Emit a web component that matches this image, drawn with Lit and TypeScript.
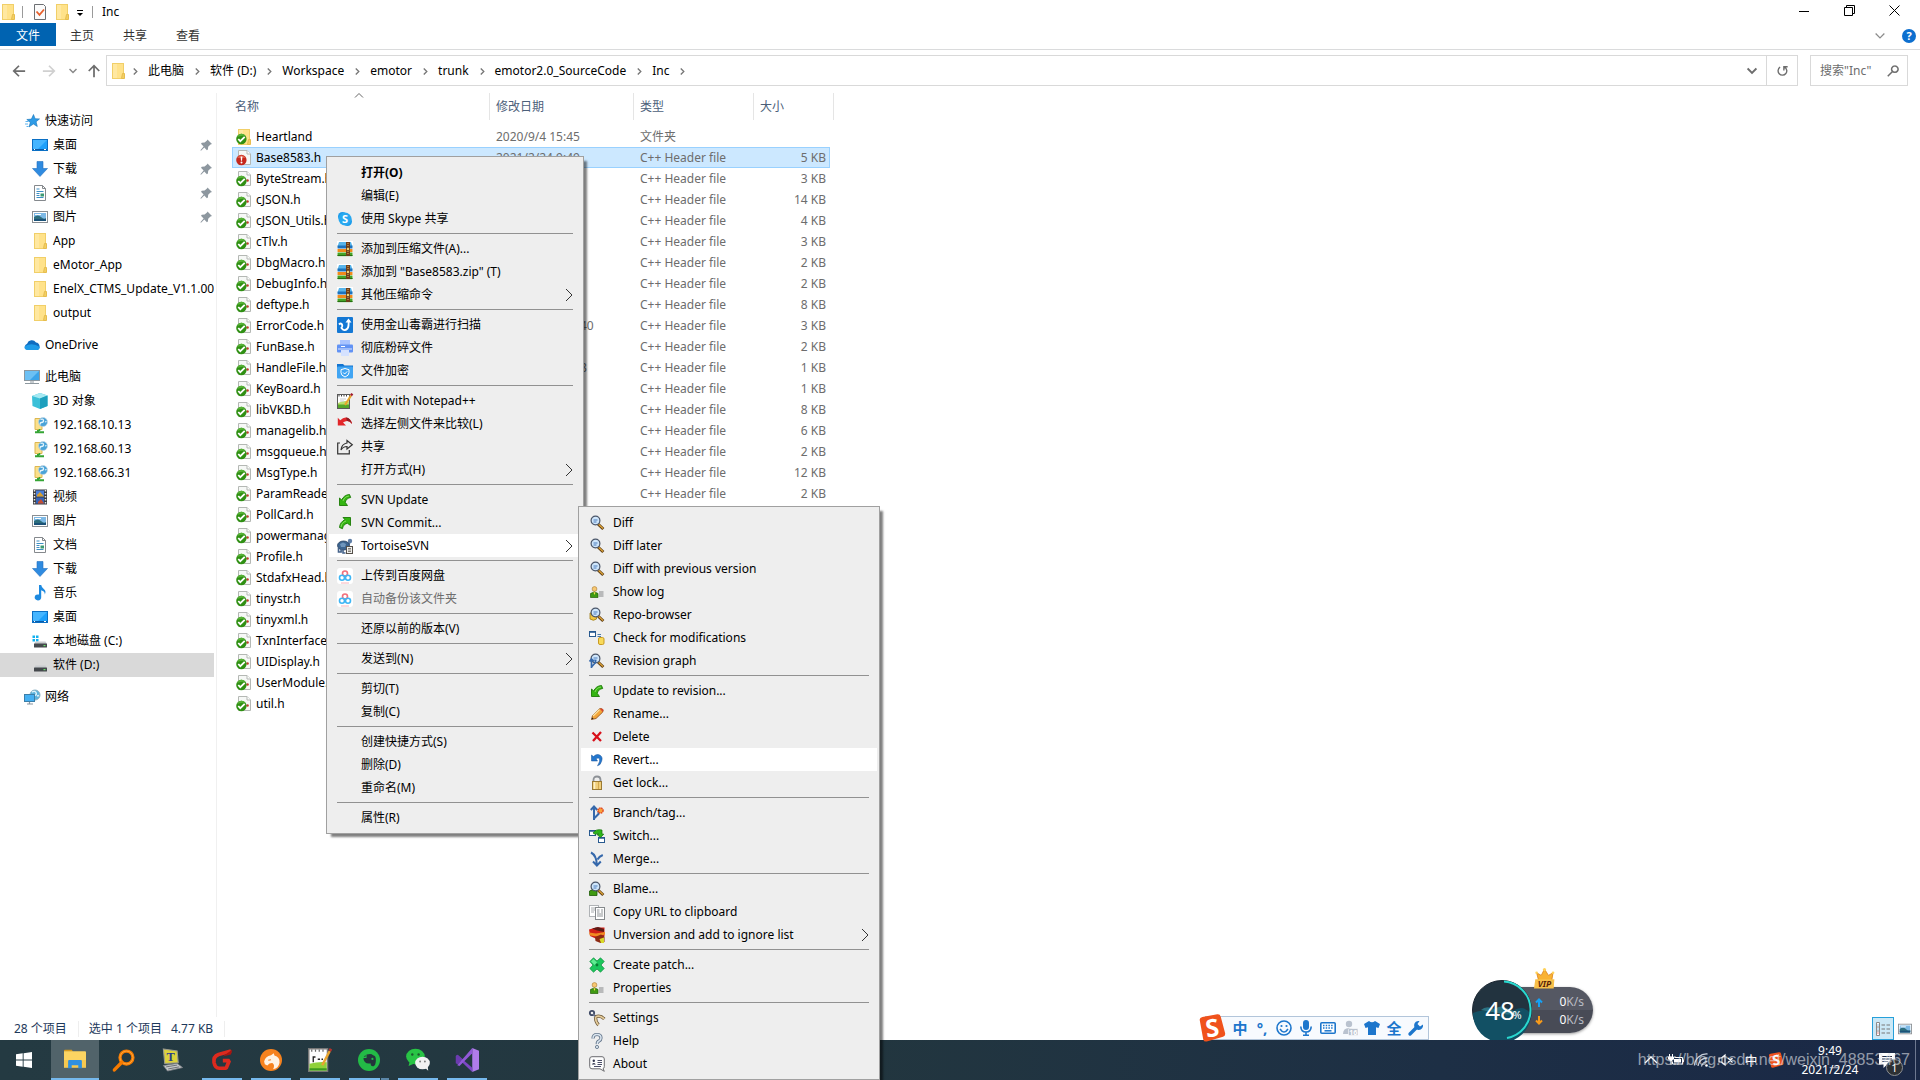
import { LitElement, html, svg, css, nothing, TemplateResult, SVGTemplateResult } from "lit";
import { customElement, property } from "lit/decorators.js";
import { classMap } from "lit/directives/class-map.js";

/* ---------- icon drawings, each on a 16 x 16 grid unless noted ---------- */

const page = svg`
  <path d="M2.5 .5H11l3.5 3.5v10.5h-12z" fill="#f6f8f6" stroke="#b4b8b4"/>
  <path d="M11 .5V4h3.5" fill="#fff" stroke="#b4b8b4"/>`;
const okBadge = svg`
  <circle cx="5.4" cy="10" r="5.2" fill="#2f9012"/>
  <path d="M1 8a5 5 0 0 1 8.6-1.3C7 6.500 4 7 1 8z" fill="#57b237"/>
  <path d="M2.300 10l2 2.200 4.400-4.400" fill="none" stroke="#fff" stroke-width="1.800"/>`;
const folderBody = svg`
  <rect x="2.500" y=".5" width="11" height="15" fill="#ffe28a" stroke="#f1cf68"/>
  <path d="M3 1h4v14H3z" fill="#ffeaa6" opacity=".8"/>
  <path d="M12.500 10.500h2v5h-3z" fill="#f3cf63" stroke="#e6bd4e"/>`;
const lens = svg`
  <path d="M9 9l5.300 5" stroke="#5b3a10" stroke-width="3"/>
  <path d="M9.500 9.200l4.500 4.200" stroke="#e0a63a" stroke-width="1.300"/>
  <circle cx="6.500" cy="5.500" r="4.400" fill="#cfe6fb" stroke="#4a5568" stroke-width="1.200"/>
  <path d="M4.500 5h4M4.500 7h3" stroke="#3c6fb4" stroke-width=".9"/>`;
const greenArrow = svg`
  <path d="M2.500 13.500V6l2.200 2C6 5 8.500 2.800 12.500 2.500l1.200 3C11 5.800 9.200 7.200 8.200 10.300l2.300 3.200z" fill="#34b512" stroke="#1c7a06" stroke-width=".9"/>
  <path d="M6 9C7 6 9 4.300 12 4" fill="none" stroke="#8be063" stroke-width=".9"/>`;
const person = svg`
  <circle cx="5.500" cy="5" r="2.400" fill="#f7c873" stroke="#a9772c" stroke-width=".6"/>
  <path d="M1.500 13.500V9.500Q5.500 6.500 9 9.500v4z" fill="#3f9a12" stroke="#256008" stroke-width=".7"/>
  <path d="M4.500 8.200L5.500 11l1-2.800z" fill="#f5e04a"/>
  <path d="M10 8h4.500M10 10h4.500M10 12h4.500" stroke="#77797c" stroke-width=".9"/>`;
const rar = svg`
  <rect width="16" height="16" fill="#fff"/>
  <path d="M2 1h12l1.500 4.500H.5z" fill="#58b4ea"/><path d="M.5 4.500h15V7.500H.5z" fill="#1c72bd"/>
  <rect x=".5" y="8" width="15" height="3" fill="#f08a1c"/>
  <rect x=".5" y="11.500" width="15" height="3.500" fill="#46a327"/><path d="M.5 14h15v1.200H.5z" fill="#256d13"/>
  <rect x="9" y="1" width="4" height="14" fill="#6e3d19"/><path d="M11 2v12" stroke="#e8b45c" stroke-dasharray="1 1"/>
  <rect x="9.500" y="6.500" width="3" height="3" fill="#f2d071" stroke="#55300f" stroke-width=".6"/>`;
const baidu = svg`
  <rect width="16" height="16" rx="3" fill="#fff"/>
  <circle cx="8" cy="5.500" r="2.500" fill="none" stroke="#f2707c" stroke-width="1.600"/>
  <circle cx="5" cy="9.700" r="2.500" fill="none" stroke="#3fb6f5" stroke-width="1.600"/>
  <circle cx="11" cy="9.700" r="2.500" fill="none" stroke="#3fb6f5" stroke-width="1.600"/>
  <path d="M4 15h8" stroke="#f6a0a8" stroke-width=".8"/>`;
const drive = svg`
  <path d="M3.500 8.500h10l1.500 2.500H2z" fill="#c9cccf"/>
  <rect x="2" y="10.500" width="13" height="4" rx=".6" fill="#45494d"/><rect x="11.500" y="12" width="2" height="1.200" fill="#69e36a"/>`;
const netFolder = svg`
  <path d="M3 1.500h7v11H3z" fill="#fbe08b" stroke="#dcb750"/><path d="M6 13v2M3 15.200h9" stroke="#35a535" stroke-width="2"/>
  <path d="M7.500 12v2" stroke="#35a535" stroke-width="1.600"/>
  <circle cx="11" cy="5" r="4.500" fill="#4aa3d8" stroke="#c9d7e0" stroke-width=".6"/>
  <path d="M8.500 2.500q3-1 3 1t-2 2-1 2M13 5l1.500-.5" stroke="#e5f4fb" stroke-width="1.300" fill="none"/>`;
const branchBlue = "#3568ab";

const ICONS: Record<string, SVGTemplateResult> = {
  folder: folderBody,
  folderOk: svg`${folderBody}${okBadge}`,
  fileOk: svg`${page}<circle cx="11.500" cy="9.500" r="1.300" fill="#c0392b"/>${okBadge}`,
  fileMod: svg`${page}<circle cx="5.400" cy="10" r="5.200" fill="#c6281c"/><path d="M1 8a5 5 0 0 1 8.800 0z" fill="#de5a45"/>
    <path d="M4.600 6.500h1.800l-.4 4.300h-1z" fill="#fff"/><circle cx="5.500" cy="12.500" r="1" fill="#fff"/>`,
  docCheck: svg`<path d="M2.500.5h9l2 2v13h-11z" fill="#fbfbfb" stroke="#6c6f73"/><path d="M4.500 7.500l3 3.300 4.500-5.300" fill="none" stroke="#e8602c" stroke-width="1.800"/>`,
  star: svg`<path d="M9.500 1.500l1.600 4.200 4.400.2-3.400 2.900 1.200 4.700-3.900-2.500L5 14l1.300-4.600L2.800 6.500l4.600-.4z" fill="#2e9be6" stroke="#1673b8" stroke-width=".6"/>
    <path d="M1.500 8.500h3M1 11h3M2.500 13.500h2" stroke="#5fb4ee"/>`,
  desktop: svg`<rect x=".5" y="2.500" width="15" height="11" fill="#1ea0fb" stroke="#0b6fc4"/><path d="M1 3h14L5 13H1z" fill="#45b5ff"/><path d="M1 12.500h14" stroke="#0a5aa6"/><path d="M2 12.500h1M12 12.500h2" stroke="#fff"/>`,
  download: svg`<path d="M5 .5h6v7h4.500L8 15.500.5 7.500H5z" fill="#2f8be0" stroke="#2371bf" stroke-width=".6"/>`,
  doc: svg`<path d="M2.500.5h8l3 3v12h-11z" fill="#fff" stroke="#85898d"/><path d="M10.500.5v3h3" fill="none" stroke="#85898d"/>
    <path d="M4.500 4h3M4.500 6.500h7M4.500 8.500h3M4.500 10.500h3M4.500 12.500h7" stroke="#3d8fc4"/><rect x="8.500" y="8.500" width="3.500" height="3" fill="#3c9a72"/>`,
  picture: svg`<rect x=".5" y="2.500" width="15" height="11" fill="#fff" stroke="#8a8f94"/><rect x="2" y="4" width="12" height="8" fill="#7db9e6"/><path d="M2 8q4-3 7 0t5 1v3H2z" fill="#2d6e7d"/><path d="M2 10h12v2H2z" fill="#1b5278"/><path d="M3 5.500h6" stroke="#fff"/>`,
  cloud: svg`<path d="M3.500 13a3.200 3.200 0 0 1-.4-6.200A5 5 0 0 1 12 5.500 4 4 0 0 1 13.500 13z" fill="#0f6cc0"/><path d="M3 13q-3-1-2.500-3.500Q8 5 15.800 10q-.3 3-2.800 3z" fill="#1f9be8"/>`,
  pc: svg`<rect x=".5" y="1.500" width="15" height="10" fill="#3ba4ea" stroke="#8b979f"/><path d="M1 2h14L6 11H1z" fill="#6cc0f4"/><path d="M1 14.500h14M6 13h4" stroke="#8d989f" stroke-width="1.200"/>`,
  cube: svg`<path d="M0 3l8-3 7.500 2.500v10.500L8 16 .5 13z" fill="#3bc0d8"/><path d="M0 3l8-3 7.500 2.500L8 5.500z" fill="#a6e9f2"/><path d="M8 5.500l7.500-3v10.500L8 16z" fill="#1d9fbd"/>`,
  net: netFolder,
  video: svg`<rect x="1" y=".5" width="14" height="15" fill="#3b3b3e"/><path d="M2.500 1v14M13.500 1v14" stroke="#e8e8e8" stroke-width="1.500" stroke-dasharray="1.500 1.500"/>
    <rect x="4" y="1.500" width="8" height="6" fill="#4a7ed8"/><rect x="4" y="8.500" width="8" height="6" fill="#3463b8"/><path d="M5 6l3-3 4 4.500H5z" fill="#d9a02c"/><path d="M6 13l3-3 3 4.500H6z" fill="#c54f32"/>`,
  music: svg`<path d="M7 0h2.200q.4 2.600 2.800 4.200 2.500 2 .8 5.300.2-3.200-3.600-4.300V12a3.300 3 0 1 1-2.200-2.400z" fill="#1d8ae0"/>`,
  driveC: svg`<path d="M.5 2.500h2.500v2.500H.5zM4 2.500h2.500v2.500H4zM.5 6h2.500v2.500H.5zM4 6h2.500v2.500H4z" fill="#12b1ef"/>${drive}`,
  driveD: drive,
  network: svg`<circle cx="11" cy="6" r="5" fill="#5db4dd" stroke="#8fb3c4"/><path d="M8 3q3-1.500 4 .5t-1 3M13 7l2-.5" stroke="#dff3fb" fill="none" stroke-width="1.400"/>
    <rect x=".5" y="5.500" width="10" height="7" fill="#45b0f2" stroke="#3c7ea8"/><path d="M3 15h6M5.500 13v2" stroke="#8794a0" stroke-width="1.200"/>`,
  pin: svg`<path d="M9.500 2.500l4.500 4.500-1.500.4-2.300 2.400-.3 2.700-1 .7-2.600-2.700L3 13.700l-.6-.5L5.600 9.400 3 6.800l.8-1 2.800-.2L9 3.500z" fill="#8d979f"/>`,
  skype: svg`<rect x="1" y="1" width="9" height="9" rx="4.500" fill="#1c9bea"/><rect x="6" y="6" width="9" height="9" rx="4.500" fill="#1c9bea"/><circle cx="8" cy="8" r="6.500" fill="#28a8f0"/>
    <text x="8" y="12" text-anchor="middle" font-size="11" font-weight="700" fill="#fff">S</text>`,
  rar,
  duba: svg`<rect width="16" height="16" rx="1" fill="#1478d4"/><path d="M2 7.500q2-2 3 0t-.5 3.500q2.500 4 6 .5 1.500-2 1-8.500" fill="none" stroke="#fff" stroke-width="1.900"/><path d="M8.500 5.500l3-4 3 4z" fill="#fff"/>`,
  shred: svg`<rect x="3" y="0" width="10" height="6" fill="#a9c4ff"/><rect y="4.500" width="16" height="8" rx="1" fill="#6293f4"/><path d="M1 9h14" stroke="#dce7ff"/><rect x="4" y="10" width="8" height="6" fill="#d5e2ff"/><path d="M4 6.500h4" stroke="#fff"/>`,
  encrypt: svg`<path d="M0 1h6l1.500 1.500H16V5H0z" fill="#1274d0"/><rect y="3.500" width="16" height="12" rx="1" fill="#41a5f3"/><path d="M8 5.500l4 1.200v3Q12 12.500 8 14q-4-1.500-4-4.300v-3z" fill="none" stroke="#fff"/><path d="M6.200 9.500l1.500 1.500 2.500-2.600" stroke="#fff" fill="none"/>`,
  npp: svg`<rect x=".5" y="1.500" width="12" height="14" fill="#fff" stroke="#5a5a5a"/><path d="M1 10q6-3 11-1.500V12H1z" fill="#b9dd6a"/><path d="M1 11.500h11V15H1z" fill="#55a628"/><path d="M2 2v1.500M4.500 2v1.500M7 2v1.500M9.500 2v1.500" stroke="#444"/><path d="M3 6h6M3 8h4" stroke="#c9ccd0"/><path d="M8 12l6-9.500" stroke="#e8a62c" stroke-width="2.200"/><path d="M14 2.500L15.300.6" stroke="#a01c2c" stroke-width="2.400"/>`,
  undoRed: svg`<path d="M.8 9.500V1.800l2.400 2.400Q8.500-1 13 3.500q2 2 2 4.500Q12 4 8 5.500L6 6.500l3 3z" fill="#e2262a"/><path d="M9 1.500q4-.5 6 6.500-2-3.500-5-3z" fill="#8d1c22"/>`,
  share: svg`<path d="M3 4H.7v10.800h11.600V11" fill="none" stroke="#333" stroke-width="1.200"/><path d="M10 1.500l5.300 4.300L10 10V7.500q-4 0-6 3.500.5-6 6-7z" fill="none" stroke="#333" stroke-width="1.200"/>`,
  greenIn: greenArrow,
  greenOut: svg`<g transform="matrix(0 1 1 0 0 0)">${greenArrow}</g>`,
  tortoise: svg`<circle cx="13" cy="3" r="2.200" fill="#5f7ea6"/><path d="M10 9l3-5.500" stroke="#5f7ea6" stroke-width="2.400"/><ellipse cx="6.500" cy="7.500" rx="6" ry="4.500" fill="#3d6590" stroke="#27405f" stroke-width=".8"/>
    <path d="M3 6l3-1.500L9 6 8 9H4z" fill="#6f96bd"/><path d="M1.500 10v4h2.600v-3M6 11.500V15h2.500" stroke="#45638a" stroke-width="1.600" fill="none"/>
    <rect x="9.500" y="8.500" width="6" height="7" fill="#f1f1ee" stroke="#55504a"/><path d="M11 10.500h3M11 12h3M11 13.500h3" stroke="#6b665f" stroke-width=".8"/>`,
  baidu,
  diff: lens,
  log: person,
  repo: svg`<path d="M1 6v6q3.500 2.500 6.500 0V6z" fill="#f2c63e" stroke="#9c7a12" stroke-width=".8"/>${lens}`,
  check: svg`<rect x=".5" y="1.500" width="6" height="5" fill="#fff" stroke="#28598f"/><path d="M0 2h7" stroke="#28598f" stroke-width="1.600"/><path d="M8.500 4.500h3.500M8.500 6.500h3.500" stroke="#4b7aa8"/><rect x="9.500" y="7.500" width="5.500" height="7" rx="1.500" fill="#f8da5a" stroke="#c99a22"/>`,
  graph: svg`${lens}<path d="M2.500 15V6M.5 8.500l2-2.500 2.500 2.500M2.500 14l4-4.500V7" fill="none" stroke="${branchBlue}" stroke-width="1.700"/>`,
  rename: svg`<path d="M2.500 13.500l1-4L10 3q2-1 3.500.2t0 3.100L7 12.500z" fill="#f3a53a" stroke="#8d4a12" stroke-width=".8"/><path d="M4 10l6.500-6.500" stroke="#fbe2a1" stroke-width="1.500"/><path d="M11 2.800q2-.8 2.800.5t-.3 2.600z" fill="#d9432f"/><path d="M2.500 13.500l.6-2 1.500 1.300z" fill="#222"/>`,
  remove: svg`<path d="M3.500 3.500l8.500 8.500M12 3L4 12" stroke="#d8101a" stroke-width="2.300"/>`,
  revert: svg`<path d="M2.500 9V3l2 1.600Q8 1 11.500 3.500T11 12.500l-2.500 1.300Q11.500 9 10.500 7T7 6.800L8.500 9z" fill="#2477cd" stroke="#124f96" stroke-width=".5"/>`,
  lock: svg`<path d="M4.500 8V5q0-3.500 3.500-3.500T11.500 5v3" fill="none" stroke="#8d9196" stroke-width="1.800"/><rect x="3.500" y="6.500" width="9" height="8" fill="#f1cf7b" stroke="#9b7a33"/><path d="M5.500 7v7" stroke="#fdf0c9" stroke-width="1.500"/><path d="M9.500 7v7" stroke="#d4a94f"/>`,
  branch: svg`<path d="M5 15V2M1.800 5L5 1.500 8.200 5M5 13.500L9.500 9V6.500" fill="none" stroke="${branchBlue}" stroke-width="2"/><circle cx="11.500" cy="5.500" r="2.600" fill="#f9a13a" stroke="#e2441f" stroke-width="1.400" stroke-dasharray="1.500 .6"/>`,
  switch: svg`<rect x=".5" y="2.500" width="6" height="5" fill="#fff" stroke="#28598f"/><path d="M0 3h7" stroke="#28598f" stroke-width="1.500"/><rect x="9.500" y="9.500" width="6" height="5" fill="#fff" stroke="#28598f"/><path d="M9 10h7" stroke="#28598f" stroke-width="1.500"/>
    <path d="M4 5q3-4.500 9-3v4l1.800.2-3.300 3.300-3.700-3.200 2-.1Q8 4.500 6.500 6.500z" fill="#2eb41a" stroke="#15720a" stroke-width=".7"/>`,
  merge: svg`<path d="M2 1.500q5.500 3 5.800 12M13.800 4Q10 5.500 8.500 8.500M4 10.500l3.900 4 3.900-4" fill="none" stroke="${branchBlue}" stroke-width="2"/>`,
  blame: svg`<path d="M.5 14.500V10Q4 7 8 10v4.500z" fill="#3f9a12" stroke="#1d5a05" stroke-width=".8"/>${lens}`,
  copy: svg`<rect x=".5" y="1.500" width="9" height="11" fill="#fff" stroke="#b0b3b6"/><path d="M2 4h4M2 6h4M2 8h3" stroke="#a9acaf"/><rect x="6.500" y="3.500" width="9" height="12" fill="#fff" stroke="#85898c"/><path d="M8 6h2.500M8 8h2.500M8 10h6M8 12h6M12 6h2M12 8h2" stroke="#8f9396"/>`,
  ignore: svg`<path d="M0 2.500L7 .5h8.500V9L10 13 1 9z" fill="#cf2018"/><path d="M3 1.500l6-1.500 6 2v3L8 3.500z" fill="#5c1a15"/><path d="M0 5.500l7 1 9-1.500v2.500L8 9.500l-7-1z" fill="#f08b21"/><path d="M6 10l6-2.500 3.500 2V15l-4 1-5-2z" fill="#8e2a14"/><path d="M10.500 12l4.500-1.500V16h-3z" fill="#d8da2a"/>`,
  patch: svg`<path d="M4.500.8L8 4l3.500-3.200 3.700 3.700L12 8l3.200 3.500-3.700 3.700L8 12l-3.500 3.200L.8 11.500 4 8 .8 4.500z" fill="#1cc65c" stroke="#0b8c3a" stroke-width=".7"/><path d="M4.500 2L8 5.500 5.500 8 2 4.500z" fill="#62ea92"/><circle cx="8" cy="8" r="1.400" fill="#0c7a34"/>`,
  props: person,
  settings: svg`<circle cx="3" cy="3" r="2.200" fill="none" stroke="#3f4a66" stroke-width="1.800"/><path d="M4 4l3 3" stroke="#66718c" stroke-width="2"/><path d="M9.500 15q-3-3-3-8M6.500 7Q11 4.500 15.300 9" fill="none" stroke="#6e5a3a" stroke-width="3.200"/><path d="M9.500 15q-3-3-3-8M6.500 7Q11 4.500 15.300 9" fill="none" stroke="#e4cb9a" stroke-width="1.600"/>`,
  help: svg`<path d="M4 5.500Q4 1.500 8 1.500t4 3.500q0 2-2 3T8.300 11" fill="none" stroke="#66788d" stroke-width="3.200"/><path d="M4 5.500Q4 1.500 8 1.500t4 3.500q0 2-2 3T8.300 11" fill="none" stroke="#dbe6f0" stroke-width="1.500"/><circle cx="8" cy="14" r="1.600" fill="#dbe6f0" stroke="#66788d" stroke-width=".9"/>`,
  about: svg`<path d="M3 .7h10q2.300 0 2.300 2.300v7.500q0 1.800-1.300 2.200l1.300 2.600-4.300-2.500H3Q.7 12.800.7 10.500V3Q.7.7 3 .7z" fill="#fdfdfd" stroke="#6c6c70"/>
    <circle cx="4.800" cy="4.800" r="1.200" fill="#30344c"/><path d="M2.800 8.500q2-2.800 4 0z" fill="#30344c"/><path d="M8.500 4.500H13M8.500 6.500H13M8.500 8.500H13M5 10.500h7" stroke="#4b4e68"/>`,
  taskStart: svg`<path d="M0 2.300L6.700 1.300V7.600H0zM7.600 1.200L16 0v7.600H7.600zM0 8.500h6.700v6.200L0 13.700zM7.600 8.500H16V16l-8.400-1.200z" fill="#fff"/>`,
  taskExplorer: svg`<path d="M0 1.200Q0 .6.700.6h5L6.500 2H0z" fill="#d99a1b"/><path d="M0 1.700h15.300q.7 0 .7.700V13.500H0z" fill="#fcd462"/><path d="M0 8h16v5.500H0z" fill="#f7c84f"/><path d="M3 14V8.800q0-.8.800-.8h8.400q.8 0 .8.800V14h-2.600v-2.200H5.600V14z" fill="#2f8fe0"/>`,
  taskSearch: svg`<circle cx="9.800" cy="6.200" r="4.700" fill="none" stroke="#f57a00" stroke-width="2.400"/><circle cx="9.800" cy="6.200" r="4.700" fill="none" stroke="#ffa53a" stroke-width=".7"/><path d="M6.300 9.800L1 15.200" stroke="#f57a00" stroke-width="2.500" stroke-linecap="round"/>`,
  taskTyphoon: svg`<path d="M1 0l10 1.500.8 8.500L2 10.500z" fill="#ddd23c" stroke="#9a9a8e" stroke-width=".8"/><path d="M1 12l10-1.500L15 13.500 4 16z" fill="#c5c8cb" stroke="#7c8084" stroke-width=".6"/><path d="M3 13l8-1.300M4.500 14.500l8-1.500" stroke="#6a6e72" stroke-width=".7"/>
    <text x="6.300" y="8.800" text-anchor="middle" font-family="Liberation Serif, serif" font-size="9" font-weight="700" fill="#2a3b8f">T</text>`,
  taskG: svg`<path d="M14.500 1.500L5.500 4Q1.500 5.500 2.200 9.800 3 14 6 14h5l2.300-5.500H8.600" fill="none" stroke="#dd2a1e" stroke-width="2.700" stroke-linejoin="bevel"/><path d="M15.500.5l-1 3.500-6 1.500 4-3z" fill="#a81410"/>`,
  taskLiebao: svg`<circle cx="8" cy="8" r="8" fill="#f6821e"/><path d="M3 9q1-4 5-4.500l2-1.500.5 1.800q4 1 3.700 5.200-.7 4-4.700 4.800 1.500-3-.2-4.500-2.300-.3-4 1.700L3.500 11z" fill="#fff3e4"/><path d="M6 8.200l2-.4" stroke="#f6821e" stroke-width=".8"/>`,
  taskNpp: svg`<rect x=".5" y=".5" width="12.500" height="15" fill="#fdfdfd" stroke="#777"/><path d="M1 15V10.500q6-1.500 11.500-1V15z" fill="#8fd13a"/><path d="M1 15v-1.500h11.500V15z" fill="#3d9a20"/><path d="M2.500 1v1.500M5 1v1.500M7.500 1v1.500M10 1v1.500" stroke="#666" stroke-width=".8"/><path d="M3.500 9.500V6H5M6.500 7.500h1.500M9 7.500h1" stroke="#222" fill="none" stroke-width=".9"/><path d="M9.500 11.500L14.500 2" stroke="#e9a430" stroke-width="1.700"/><path d="M14.500 2l.8-1.500" stroke="#b5322c" stroke-width="1.900"/>`,
  taskEvernote: svg`<circle cx="8" cy="8" r="8" fill="#23bb46"/><path d="M4 6.500h2.200V4q3.500-1 4.800.5 2 .2 2 3.500 0 4-1.700 4.500-2.300.3-2-2Q6.300 11 5 9.500 3.800 8 4 6.500zM4.200 5.700L5.500 4.300v1.400z" fill="#24363c"/><circle cx="10.500" cy="7.200" r=".8" fill="#23bb46"/>`,
  taskWechat: svg`<ellipse cx="6.300" cy="5.700" rx="6.200" ry="5.200" fill="#28c445"/><path d="M2.500 9l-.8 3 3.500-1.500z" fill="#28c445"/><circle cx="4.200" cy="4.300" r=".8" fill="#1b5a2c"/><circle cx="8.400" cy="4.300" r=".8" fill="#1b5a2c"/>
    <ellipse cx="11" cy="10" rx="4.900" ry="4.200" fill="#f1f1f1"/><path d="M13 13.500l1.800 1.700-.3-2.700z" fill="#f1f1f1"/><circle cx="9.400" cy="9" r=".6" fill="#777"/><circle cx="12.600" cy="9" r=".6" fill="#777"/>`,
  taskVs: svg`<path d="M11.500 0L16 1.800v12.400L11.500 16z" fill="#b07cea"/><path d="M1.500 4.500l10 8.700V16L.5 5.500z" fill="#7c47c4"/><path d="M.5 5.500l1.300-1 3.400 3-3.200 3.500-1.500-.8z" fill="#6b3bb0"/><path d="M1.500 11.500L11.500 0v3.500L3 12z" fill="#9159d8"/>`,
  details: svg`<path d="M1.500 1.500h3v13h-3zM1.500 6h3M1.500 10h3" fill="#fff" stroke="#8a8a8a"/><path d="M6.500 4H10M11.500 4H15M6.500 8H10M11.500 8H15M6.500 12H10M11.500 12H15" stroke="#777"/><path d="M2.500 12h1" stroke="#d22"/><path d="M2.500 8h1M2.500 4h1" stroke="#28c"/>`,
  smile: svg`<circle cx="8" cy="8" r="7" fill="none" stroke="#1d76cc" stroke-width="1.600"/><circle cx="5.500" cy="6" r="1.100" fill="#1d76cc"/><circle cx="10.500" cy="6" r="1.100" fill="#1d76cc"/><path d="M4 9q4 6 8 0" fill="none" stroke="#1d76cc" stroke-width="1.500"/>`,
  mic: svg`<rect x="5" y="0" width="6" height="10" rx="3" fill="#1d76cc"/><path d="M2.800 6.500Q3 12 8 12t5.200-5.500M8 12v3.500M5 15.200h6" fill="none" stroke="#1d76cc" stroke-width="1.600"/>`,
  keyboard: svg`<rect x=".8" y="2.800" width="14.400" height="10.400" rx="1" fill="#fff" stroke="#1d76cc" stroke-width="1.600"/><path d="M3 5.500h10M3 8h10" stroke="#1d76cc" stroke-width="1.500" stroke-dasharray="1.500 1.200"/><path d="M4.500 10.800h7" stroke="#1d76cc" stroke-width="1.500"/>`,
  user: svg`<circle cx="7" cy="4" r="3.200" fill="#b9c2cf"/><path d="M1 14q0-6 6-6t6 6z" fill="#b9c2cf"/><rect x="6.500" y="8.500" width="9.500" height="7" rx="1" fill="#b9c2cf" stroke="#fff" stroke-width=".6"/><text x="11.200" y="14.800" text-anchor="middle" font-size="7" font-weight="700" fill="#fff">16</text>`,
  shirt: svg`<path d="M5 1q3 2.500 6 0l5 3-1.500 4-2.500-.8V15H4V7.200L1.500 8 0 4z" fill="#1d76cc"/>`,
  wrench: svg`<path d="M2 14l7-7" stroke="#1d76cc" stroke-width="3.400" stroke-linecap="round"/><path d="M15 4.500A4.500 4.500 0 1 1 11.500 1L9.500 4l2.500 2.500z" fill="#1d76cc"/>`,
  sogou: svg`<path d="M1 3.500Q.8 2 2.500 1.700L11 .2q1.600-.2 2 1.300L15.500 11q.3 1.500-1.200 2L5 15.700q-1.500.4-2-1.200z" fill="#f0521c"/><text x="8.200" y="13" text-anchor="middle" font-size="14" font-weight="700" fill="#fff" transform="rotate(-8 8 8)">S</text>`,
  crown: svg`<path d="M2 4l3.500 2L8 1.200 11 6l3.500-2-1 6h-10z" fill="#f9b233" stroke="#d97f14" stroke-width=".6"/><circle cx="8" cy="1.500" r="1.200" fill="#ffd25a"/><circle cx="2" cy="4" r="1" fill="#ffd25a"/><circle cx="14.500" cy="4" r="1" fill="#ffd25a"/>
    <path d="M1 9h14.500L15 16H0z" fill="#f8c04a"/><text x="8" y="14.800" text-anchor="middle" font-size="6.500" font-weight="700" font-style="italic" fill="#5a2408">VIP</text>`,
  trayUp: svg`<path d="M2 11l6-6 6 6" fill="none" stroke="#fff" stroke-width="1.400"/>`,
  battery: svg`<path d="M6.500 5.500h8v6.500h-10V9.500" fill="none" stroke="#fff"/><rect x="6" y="7" width="7" height="3.500" fill="#fff"/><path d="M15.500 7.500v2.500" stroke="#fff"/><path d="M1.500 2v3M4.500 2v3M.5 5h5v2L4 8.500H2L.5 7zM3 8.500V13" stroke="#fff" fill="#fff"/>`,
  wifi: svg`<path d="M1.500 13.500A12 12 0 0 1 14.500 2M5 14A9 9 0 0 1 14.500 6M8.500 14.500A6 6 0 0 1 14.500 9.500" fill="none" stroke="#c9d0da" stroke-width="1.300"/><circle cx="13.500" cy="13.500" r="1.300" fill="#fff"/>`,
  mute: svg`<path d="M1 6h2.500L7 3v10L3.500 10H1zM10 6l4.500 4.500M14.500 6L10 10.500" fill="none" stroke="#fff" stroke-width="1.200"/>`,
  note: svg`<path d="M0 1h16v11.500H8L4.500 16v-3.500H0z" fill="#fff"/><path d="M3 4.500h10M3 7h10M3 9.500h6" stroke="#1c2b47" stroke-width="1.200"/>`,
};

const iconStyles = css`
  .icon { width: 16px; height: 16px; flex: none; display: block; overflow: visible; }
`;
const baseStyles = css`
  * { box-sizing: border-box; }
  button, input, a {
    font: inherit; color: inherit; background: none; border: 0; margin: 0; padding: 0;
    text-align: left; text-decoration: none; outline: none;
  }
`;

const icon = (name: string) =>
  html`<svg class="icon i-${name}" viewBox="0 0 16 16" aria-hidden="true">${ICONS[name]}</svg>`;
const chevron = (cls: string, d: string) =>
  html`<svg class=${cls} viewBox="0 0 16 16" aria-hidden="true"><path d=${d}></path></svg>`;

/* ---------- data ---------- */

interface MenuItem {
  label: string;
  icon?: string;
  sub?: boolean;
  strong?: boolean;
  active?: boolean;
  disabled?: boolean;
}
type MenuGroup = MenuItem[];

const FILE_MENU: MenuGroup[] = [
  [{ label: "打开(O)", strong: true }, { label: "编辑(E)" }, { label: "使用 Skype 共享", icon: "skype" }],
  [
    { label: "添加到压缩文件(A)...", icon: "rar" },
    { label: '添加到 "Base8583.zip" (T)', icon: "rar" },
    { label: "其他压缩命令", icon: "rar", sub: true },
  ],
  [
    { label: "使用金山毒霸进行扫描", icon: "duba" },
    { label: "彻底粉碎文件", icon: "shred" },
    { label: "文件加密", icon: "encrypt" },
  ],
  [
    { label: "Edit with Notepad++", icon: "npp" },
    { label: "选择左侧文件来比较(L)", icon: "undoRed" },
    { label: "共享", icon: "share" },
    { label: "打开方式(H)", sub: true },
  ],
  [
    { label: "SVN Update", icon: "greenIn" },
    { label: "SVN Commit...", icon: "greenOut" },
    { label: "TortoiseSVN", icon: "tortoise", sub: true, active: true },
  ],
  [
    { label: "上传到百度网盘", icon: "baidu" },
    { label: "自动备份该文件夹", icon: "baidu", disabled: true },
  ],
  [{ label: "还原以前的版本(V)" }],
  [{ label: "发送到(N)", sub: true }],
  [{ label: "剪切(T)" }, { label: "复制(C)" }],
  [{ label: "创建快捷方式(S)" }, { label: "删除(D)" }, { label: "重命名(M)" }],
  [{ label: "属性(R)" }],
];

const SVN_MENU: MenuGroup[] = [
  [
    { label: "Diff", icon: "diff" },
    { label: "Diff later", icon: "diff" },
    { label: "Diff with previous version", icon: "diff" },
    { label: "Show log", icon: "log" },
    { label: "Repo-browser", icon: "repo" },
    { label: "Check for modifications", icon: "check" },
    { label: "Revision graph", icon: "graph" },
  ],
  [
    { label: "Update to revision...", icon: "greenIn" },
    { label: "Rename...", icon: "rename" },
    { label: "Delete", icon: "remove" },
    { label: "Revert...", icon: "revert", active: true },
    { label: "Get lock...", icon: "lock" },
  ],
  [
    { label: "Branch/tag...", icon: "branch" },
    { label: "Switch...", icon: "switch" },
    { label: "Merge...", icon: "merge" },
  ],
  [
    { label: "Blame...", icon: "blame" },
    { label: "Copy URL to clipboard", icon: "copy" },
    { label: "Unversion and add to ignore list", icon: "ignore", sub: true },
  ],
  [{ label: "Create patch...", icon: "patch" }, { label: "Properties", icon: "props" }],
  [
    { label: "Settings", icon: "settings" },
    { label: "Help", icon: "help" },
    { label: "About", icon: "about" },
  ],
];

interface Place {
  label: string;
  icon: string;
  pinned?: boolean;
  current?: boolean;
}
const PLACES: { root: Place; items: Place[] }[] = [
  {
    root: { label: "快速访问", icon: "star" },
    items: [
      { label: "桌面", icon: "desktop", pinned: true },
      { label: "下载", icon: "download", pinned: true },
      { label: "文档", icon: "doc", pinned: true },
      { label: "图片", icon: "picture", pinned: true },
      { label: "App", icon: "folder" },
      { label: "eMotor_App", icon: "folder" },
      { label: "EnelX_CTMS_Update_V1.1.00", icon: "folder" },
      { label: "output", icon: "folder" },
    ],
  },
  { root: { label: "OneDrive", icon: "cloud" }, items: [] },
  {
    root: { label: "此电脑", icon: "pc" },
    items: [
      { label: "3D 对象", icon: "cube" },
      { label: "192.168.10.13", icon: "net" },
      { label: "192.168.60.13", icon: "net" },
      { label: "192.168.66.31", icon: "net" },
      { label: "视频", icon: "video" },
      { label: "图片", icon: "picture" },
      { label: "文档", icon: "doc" },
      { label: "下载", icon: "download" },
      { label: "音乐", icon: "music" },
      { label: "桌面", icon: "desktop" },
      { label: "本地磁盘 (C:)", icon: "driveC" },
      { label: "软件 (D:)", icon: "driveD", current: true },
    ],
  },
  { root: { label: "网络", icon: "network" }, items: [] },
];

const HEADER_TYPE = "C++ Header file";
const FILES: { name: string; kb: number; date?: string }[] = [
  { name: "Base8583.h", kb: 5, date: "2021/2/24 9:49" },
  { name: "ByteStream.h", kb: 3 },
  { name: "cJSON.h", kb: 14 },
  { name: "cJSON_Utils.h", kb: 4 },
  { name: "cTlv.h", kb: 3 },
  { name: "DbgMacro.h", kb: 2 },
  { name: "DebugInfo.h", kb: 2 },
  { name: "deftype.h", kb: 8 },
  { name: "ErrorCode.h", kb: 3, date: "2020/10/28 11:40" },
  { name: "FunBase.h", kb: 2 },
  { name: "HandleFile.h", kb: 1, date: "2020/9/24 13:38" },
  { name: "KeyBoard.h", kb: 1 },
  { name: "libVKBD.h", kb: 8 },
  { name: "managelib.h", kb: 6 },
  { name: "msgqueue.h", kb: 2 },
  { name: "MsgType.h", kb: 12 },
  { name: "ParamReader.h", kb: 2 },
  { name: "PollCard.h", kb: 2 },
  { name: "powermanager.h", kb: 2 },
  { name: "Profile.h", kb: 2 },
  { name: "StdafxHead.h", kb: 2 },
  { name: "tinystr.h", kb: 9 },
  { name: "tinyxml.h", kb: 64 },
  { name: "TxnInterface.h", kb: 2 },
  { name: "UIDisplay.h", kb: 3 },
  { name: "UserModule.h", kb: 2 },
  { name: "util.h", kb: 2 },
];

const CRUMBS = ["此电脑", "软件 (D:)", "Workspace", "emotor", "trunk", "emotor2.0_SourceCode", "Inc"];

const TASKS: { icon: string; label: string; state?: string }[] = [
  { icon: "taskExplorer", label: "Explorer", state: "focused" },
  { icon: "taskSearch", label: "Everything" },
  { icon: "taskTyphoon", label: "Terminal" },
  { icon: "taskG", label: "Reader", state: "running" },
  { icon: "taskLiebao", label: "Browser", state: "running" },
  { icon: "taskNpp", label: "Notepad++", state: "running" },
  { icon: "taskEvernote", label: "Evernote", state: "stacked" },
  { icon: "taskWechat", label: "WeChat", state: "running" },
  { icon: "taskVs", label: "Visual Studio", state: "running" },
];

/* ---------- pop-up menu ---------- */

@customElement("popup-menu")
export class PopupMenu extends LitElement {
  @property({ attribute: false }) groups: MenuGroup[] = [];

  static styles = [
    baseStyles,
    iconStyles,
    css`
      :host { display: block; }
      .menu {
        background: #eee; border: 1px solid #a0a0a0; padding: 4px 2px;
        box-shadow: 4px 4px 2px -1px rgba(0, 0, 0, 0.5);
      }
      .line { height: 1px; margin: 3px 8px; background: #919191; }
      .item {
        display: flex; align-items: center; width: 100%; height: 23px; padding: 0 8px;
        line-height: 16px; color: #000; white-space: nowrap;
      }
      .slot { width: 16px; height: 16px; margin-right: 8px; flex: none; }
      .label { flex: 1; }
      .strong { font-weight: 700; }
      .active { background: #fff; }
      .item:disabled { color: #6d6d6d; }
      .arrow { width: 8px; height: 14px; fill: none; stroke: #333; stroke-width: 1; }
    `,
  ];

  render() {
    return html`<div class="menu" role="menu">
      ${this.groups.map(
        (g, i) => html`
          ${i ? html`<div class="line" role="separator"></div>` : nothing}
          ${g.map(
            (m) => html`<button
              role="menuitem"
              class=${classMap({ item: true, strong: !!m.strong, active: !!m.active })}
              ?disabled=${m.disabled}
            >
              <span class="slot">${m.icon ? icon(m.icon) : nothing}</span>
              <span class="label">${m.label}</span>
              ${m.sub
                ? html`<svg class="arrow" viewBox="0 0 8 14" aria-hidden="true"><path d="M1 1l6 6-6 6"></path></svg>`
                : nothing}
            </button>`
          )}
        `
      )}
    </div>`;
  }
}

/* ---------- navigation tree ---------- */

@customElement("places-pane")
export class PlacesPane extends LitElement {
  static styles = [
    baseStyles,
    iconStyles,
    css`
      :host { display: block; }
      .tree { display: flex; flex-direction: column; gap: 8px; padding: 16px 2px 0 0; }
      .place {
        display: flex; align-items: center; gap: 5px; height: 24px; padding-left: 32px;
        line-height: 16px; color: #000; white-space: nowrap; overflow: hidden;
      }
      .root { padding-left: 24px; }
      .label { flex: 1; }
      .current { background: #d9d9d9; }
    `,
  ];

  private place(p: Place, root = false): TemplateResult {
    return html`<a href="#" class=${classMap({ place: true, root, current: !!p.current })}
      >${icon(p.icon)}<span class="label">${p.label}</span>${p.pinned ? icon("pin") : nothing}</a
    >`;
  }

  render() {
    return html`<nav class="tree">
      ${PLACES.map((g) => html`<div>${this.place(g.root, true)}${g.items.map((p) => this.place(p))}</div>`)}
    </nav>`;
  }
}

/* ---------- file table ---------- */

@customElement("file-table")
export class FileTable extends LitElement {
  static styles = [
    baseStyles,
    iconStyles,
    css`
      :host { display: block; }
      .files { border-collapse: collapse; table-layout: fixed; width: 602px; line-height: 16px; }
      .c-name { width: 258px; }
      .c-date { width: 144px; }
      .c-type { width: 120px; }
      .c-size { width: 76px; }
      .c-end { width: 4px; }
      .head { height: 33px; }
      th { padding: 0 0 6px 6px; font-weight: 400; text-align: left; vertical-align: top; color: #4c607a; white-space: nowrap; overflow: visible; }
      .name-head { padding-left: 3px; }
      .cell { display: flex; align-items: center; justify-content: space-between; height: 27px; border-right: 1px solid #e5e5e5; position: relative; }
      .plain { border-right-color: transparent; }
      .sort { position: absolute; left: 119px; top: 0; width: 10px; height: 5px; fill: none; stroke: #666; }
      td { height: 21px; padding: 0 0 0 6px; color: #6d6d6d; white-space: nowrap; }
      .name { padding-left: 4px; color: #000; }
      .name-box { display: flex; align-items: center; gap: 4px; }
      .size { padding: 0 4px 0 0; text-align: right; }
      .end { padding: 0; vertical-align: top; }
      .selected td:not(.end) { background: #cce8ff; box-shadow: inset 0 1px #99d1ff, inset 0 -1px #99d1ff; }
      .selected .name:not(.end) { box-shadow: inset 0 1px #99d1ff, inset 0 -1px #99d1ff, inset 1px 0 #99d1ff; }
      .selected .size:not(.end) { box-shadow: inset 0 1px #99d1ff, inset 0 -1px #99d1ff, inset -1px 0 #99d1ff; }
    `,
  ];

  private row(name: string, ic: string, date: string, type: string, size: string, selected = false) {
    return html`<tr class=${classMap({ selected })}>
      <td class="name"><span class="name-box">${icon(ic)}${name}</span></td>
      <td>${date}</td>
      <td>${type}</td>
      <td class="size">${size}</td>
      <td class="end"></td>
    </tr>`;
  }

  render() {
    return html`<table class="files">
      <colgroup>
        <col class="c-name" /><col class="c-date" /><col class="c-type" /><col class="c-size" /><col class="c-end" />
      </colgroup>
      <thead>
        <tr class="head">
          <th class="name-head">
            <div class="cell">名称<svg class="sort" viewBox="0 0 10 5" aria-hidden="true"><path d="M1 4.500l4-4 4 4"></path></svg></div>
          </th>
          <th><div class="cell">修改日期</div></th>
          <th><div class="cell">类型</div></th>
          <th><div class="cell plain">大小</div></th>
          <td class="end"><div class="cell"></div></td>
        </tr>
      </thead>
      <tbody>
        ${this.row("Heartland", "folderOk", "2020/9/4 15:45", "文件夹", "")}
        ${FILES.map((f, i) =>
          this.row(f.name, i ? "fileOk" : "fileMod", f.date ?? "2020/9/4 15:45", HEADER_TYPE, `${f.kb} KB`, i === 0)
        )}
      </tbody>
    </table>`;
  }
}

/* ---------- task bar ---------- */

@customElement("task-bar")
export class TaskBar extends LitElement {
  static styles = [
    baseStyles,
    iconStyles,
    css`
      :host { display: block; }
      .bar {
        display: flex; height: 40px; color: #fff; position: relative;
        background: linear-gradient(90deg, #243a42 0%, #22363f 45%, #1d2f45 75%, #1a2846 100%);
      }
      .start { width: 48px; margin-right: 3px; display: grid; place-items: center; }
      .tasks { display: flex; gap: 1px; flex: 1; }
      .task { width: 48px; display: grid; place-items: center; }
      .task .icon { width: 22px; height: 22px; }
      .task .i-taskNpp, .task .i-taskWechat, .task .i-taskVs { width: 24px; height: 24px; }
      .focused { background: #51636a; box-shadow: inset 0 -2px #76b9ed; }
      .running { background: linear-gradient(#76b9ed, #76b9ed) 4px bottom / 40px 2px no-repeat; }
      .stacked {
        background: linear-gradient(#76b9ed, #76b9ed) 4px bottom / 31px 2px no-repeat,
          linear-gradient(#5b87a8, #5b87a8) 36px bottom / 8px 2px no-repeat;
      }
      .tray { display: flex; align-items: center; gap: 9px; padding-right: 4px; }
      .ime { font-size: 13px; width: 16px; text-align: center; }
      .clock { width: 74px; margin-right: 3px; display: flex; flex-direction: column; align-items: center; line-height: 19px; }
      .notes { position: relative; display: block; margin-right: 11px; }
      .count {
        position: absolute; left: 7px; top: 7px; width: 17px; height: 17px; border-radius: 50%;
        background: #2d3033; border: 1px solid #8d9094; font-size: 11px; line-height: 15px; text-align: center;
      }
      .edge { width: 1px; height: 40px; background: #6d7890; }
      .mark {
        position: absolute; right: 10px; top: 0; line-height: 40px; font-size: 16px;
        font-family: "Liberation Sans", sans-serif; color: rgba(225, 228, 233, 0.62); white-space: nowrap; pointer-events: none;
      }
    `,
  ];

  render() {
    return html`<footer class="bar">
      <button class="start" aria-label="Start">${icon("taskStart")}</button>
      <div class="tasks">
        ${TASKS.map((t) => html`<button class="task ${t.state ?? ""}" aria-label=${t.label}>${icon(t.icon)}</button>`)}
      </div>
      <div class="tray">
        ${icon("trayUp")}${icon("battery")}${icon("wifi")}${icon("mute")}
        <span class="ime">中</span>
        ${icon("sogou")}
        <time class="clock"><span>9:49</span><span>2021/2/24</span></time>
        <button class="notes" aria-label="Notifications">${icon("note")}<span class="count">1</span></button>
        <span class="edge"></span>
      </div>
      <span class="mark">https://blog.csdn.net/weixin_48853467</span>
    </footer>`;
  }
}

/* ---------- whole desktop ---------- */

@customElement("app-root")
export class AppRoot extends LitElement {
  static styles = [
    baseStyles,
    iconStyles,
    css`
      :host {
        display: block; height: 100vh; position: relative; overflow: hidden; background: #fff; color: #000;
        font-family: "Noto Sans", "Noto Sans CJK SC", sans-serif; font-size: 12px; line-height: 16px;
      }
      .screen { display: flex; flex-direction: column; height: 100%; }
      .title { display: flex; height: 23px; padding-right: 3px; }
      .quick { display: flex; align-items: center; flex: 1; }
      .quick .icon { margin-right: 6px; }
      .bar { width: 1px; height: 12px; background: #9a9a9a; margin-right: 9px; }
      .drop { width: 8px; height: 8px; margin: 4px 8px 0 0; }
      .win { width: 45px; height: 20px; display: grid; place-items: center; }
      .win svg { width: 11px; height: 11px; fill: none; stroke: #000; }
      .ribbon { display: flex; align-items: center; gap: 1px; height: 27px; padding-bottom: 3px; border-bottom: 1px solid #dadbdc; color: #333; }
      .tab { height: 23px; padding: 2px 14px 0; }
      .file { width: 56px; padding: 2px 16px 0; background: #0063b1; color: #fff; margin-right: -1px; }
      .spring { flex: 1; }
      .small { width: 10px; height: 10px; fill: none; stroke: #8c8c8c; stroke-width: 2; margin: 2px 16px 0 0; }
      .q { width: 14px; height: 14px; margin: 2px 4px 0 0; border-radius: 50%; background: #0d6fcf; color: #fff; font-size: 11px; line-height: 14px; font-weight: 700; text-align: center; }
      .address { display: flex; align-items: center; padding: 5px 12px 0 12px; }
      .nav { display: flex; align-items: center; width: 94px; }
      .nav svg { fill: none; stroke: #6d6d6d; stroke-width: 2; flex: none; }
      .arrow { width: 14px; height: 14px; }
      .nav .back { margin-right: 16px; }
      .nav .off { stroke: #d0d0d0; margin-right: 13px; }
      .nav .tiny { width: 8px; height: 8px; margin-right: 10px; stroke: #888; stroke-width: 3; }
      .path { display: flex; align-items: center; flex: 1; height: 31px; border: 1px solid #d9d9d9; padding-left: 3px; }
      .path .icon { margin-right: 6px; }
      .sep { width: 7px; height: 7px; fill: none; stroke: #777; stroke-width: 3; margin: 1px 9px 0 0; }
      .crumb { margin-right: 10px; white-space: nowrap; }
      .expand { width: 28px; display: grid; place-items: center; }
      .expand svg { width: 10px; height: 10px; fill: none; stroke: #6d6d6d; stroke-width: 3; }
      .reload { width: 31px; height: 29px; border-left: 1px solid #d9d9d9; display: grid; place-items: center; }
      .reload svg { width: 11px; height: 11px; fill: none; stroke: #6d6d6d; stroke-width: 2; }
      .search { display: flex; align-items: center; width: 98px; height: 31px; margin-left: 12px; padding: 0 8px 0 9px; border: 1px solid #d9d9d9; }
      .search input { flex: 1; width: 40px; color: #6d6d6d; }
      .search input::placeholder { color: #6d6d6d; opacity: 1; }
      .search svg { width: 12px; height: 12px; fill: none; stroke: #6d6d6d; stroke-width: 2; }
      .body { display: flex; flex: 1; min-height: 0; padding-top: 7px; }
      .side { width: 217px; flex: none; border-right: 1px solid #f0f0f0; }
      .main { flex: 1; padding-left: 15px; }
      .status { display: flex; align-items: center; height: 23px; padding-left: 14px; color: #1e395b; }
      .status span { padding-right: 11px; }
      .status .sum { padding: 0 9px 0 10px; border-left: 1px solid #eee; }
      .status .kb { border-right: 1px solid #eee; flex: none; }
      .view { width: 22px; height: 23px; display: grid; place-items: center; }
      .on { background: #cbe8f6; border: 1px solid #26a0da; }
      .last { width: 26px; padding-right: 4px; }
      .last .icon { width: 14px; height: 14px; }

      .popup { position: absolute; left: 326px; top: 156px; width: 258px; }
      .sub { left: 578px; top: 506px; width: 302px; }

      .sogou { position: absolute; right: 491px; bottom: 38px; display: flex; align-items: center; }
      .sogou .i-sogou { width: 28px; height: 28px; margin-right: -21px; position: relative; }
      .ime {
        display: flex; align-items: center; gap: 6px; height: 24px; padding: 0 4px 0 26px;
        border: 1px solid #b2c5da; background: #f7fafe; color: #1d76cc; font-size: 15px; font-weight: 700;
      }
      .key { display: grid; place-items: center; width: 16px; height: 16px; line-height: 16px; }

      .meter { position: absolute; left: 1472px; bottom: 40px; width: 121px; height: 60px; display: flex; align-items: center; }
      .pill {
        flex: 1; height: 46px; margin-left: 30px; padding: 7px 9px 5px 33px; border-radius: 0 23px 23px 0; color: #b9bcc4;
        background: linear-gradient(#555863 0 50%, #484b56 50%); display: grid; align-content: space-between;
        box-shadow: 0 1px 3px rgba(0, 0, 0, 0.4);
      }
      .rate { display: flex; align-items: center; font-size: 12px; }
      .rate b { flex: 1; font-weight: 400; color: #fff; text-align: right; }
      .rate svg { width: 8px; height: 9px; fill: none; stroke-width: 2; }
      .up { stroke: #15a1f5; }
      .down { stroke: #f79a1a; }
      .dial { position: absolute; left: 0; top: 0; width: 60px; height: 60px; font-family: "Liberation Sans Narrow", "Noto Sans", sans-serif; }
      .crown { position: absolute; left: 62px; top: -13px; }
      .crown .icon { width: 21px; height: 22px; }
    `,
  ];

  render() {
    return html`
      <div class="screen">
        <header class="title">
          <div class="quick">
            ${icon("folder")}<span class="bar"></span>${icon("docCheck")}${icon("folder")}
            <svg class="drop" viewBox="0 0 8 8" aria-hidden="true"><path d="M1 .5h6" stroke="#000"></path><path d="M1 3h6L4 6z"></path></svg>
            <span class="bar"></span><span>Inc</span>
          </div>
          <button class="win" aria-label="Minimize"><svg viewBox="0 0 11 11"><path d="M0 6.500h10"></path></svg></button>
          <button class="win" aria-label="Restore"><svg viewBox="0 0 11 11"><path d="M.5 2.500h8v8h-8zM2.500 2.500v-2h8v8h-2"></path></svg></button>
          <button class="win" aria-label="Close"><svg viewBox="0 0 11 11"><path d="M.5.5l10 10M10.500.5l-10 10"></path></svg></button>
        </header>
        <nav class="ribbon">
          <button class="tab file">文件</button>
          <button class="tab">主页</button>
          <button class="tab">共享</button>
          <button class="tab">查看</button>
          <span class="spring"></span>
          ${chevron("small", "M1 4l7 7 7-7")}
          <button class="q" aria-label="Help">?</button>
        </nav>
        <div class="address">
          <div class="nav">
            ${chevron("arrow back", "M15 8H2M8 2L2 8l6 6")}
            ${chevron("arrow off", "M1 8h13M8 2l6 6-6 6")}
            ${chevron("tiny", "M1 4l7 7 7-7")}
            ${chevron("arrow", "M8 15V2M2 8l6-6 6 6")}
          </div>
          <div class="path">
            ${icon("folder")}${chevron("sep", "M4 1l7 7-7 7")}
            ${CRUMBS.map((c) => html`<button class="crumb">${c}</button>${chevron("sep", "M4 1l7 7-7 7")}`)}
            <span class="spring"></span>
            <button class="expand" aria-label="History">${chevron("", "M1 4l7 7 7-7")}</button>
            <button class="reload" aria-label="Refresh">${chevron("", "M11 3a6.300 6.300 0 1 1-6.500.2M10 8V2.500h5.500")}</button>
          </div>
          <label class="search"
            ><input type="search" placeholder='搜索"Inc"' aria-label="搜索" />${chevron("", "M1 15l6-6M10.500 1.200a4.300 4.300 0 1 1-.1 0")}</label
          >
        </div>
        <div class="body">
          <aside class="side"><places-pane></places-pane></aside>
          <main class="main"><file-table></file-table></main>
        </div>
        <div class="status">
          <span>28 个项目</span><span class="sum">选中 1 个项目</span><span class="kb">4.77 KB</span>
          <i class="spring"></i>
          <button class="view on" aria-label="Details">${icon("details")}</button>
          <button class="view last" aria-label="Thumbnails">${icon("picture")}</button>
        </div>
        <task-bar></task-bar>
      </div>

      <popup-menu class="popup" .groups=${FILE_MENU}></popup-menu>
      <popup-menu class="popup sub" .groups=${SVN_MENU}></popup-menu>

      <div class="sogou">
        ${icon("sogou")}
        <div class="ime">
          <span class="key">中</span><span class="key">°,</span>${icon("smile")}${icon("mic")}${icon("keyboard")}${icon("user")}${icon("shirt")}
          <span class="key">全</span>${icon("wrench")}
        </div>
      </div>

      <div class="meter">
        <div class="pill">
          <span class="rate"><svg class="up" viewBox="0 0 8 9"><path d="M4 9V1.500M1 4.500l3-3 3 3"></path></svg><b>0</b>K/s</span>
          <span class="rate"><svg class="down" viewBox="0 0 8 9"><path d="M4 0v7.500M1 4.500l3 3 3-3"></path></svg><b>0</b>K/s</span>
        </div>
        <svg class="dial" viewBox="0 0 60 60">
          <circle cx="30" cy="30" r="29.500" fill="#22333f" stroke="#1a2530"></circle>
          <path d="M1 33q10-5 20 0t20-2 18 3A29 29 0 0 1 1 33z" fill="#125064"></path>
          <path d="M9 30q5-5 14-1 5-5 14 0t14 1q-8 6-20 4t-22-4z" fill="#2b7382"></path>
          <path d="M32 1.500A28.500 28.500 0 0 1 35 58" fill="none" stroke="#29d8cf" stroke-width="2"></path>
          <text x="28" y="40" text-anchor="middle" font-size="26" fill="#fff">48</text>
          <text x="45" y="39" text-anchor="middle" font-size="11" fill="#fff">%</text>
        </svg>
        <span class="crown">${icon("crown")}</span>
      </div>
    `;
  }
}
